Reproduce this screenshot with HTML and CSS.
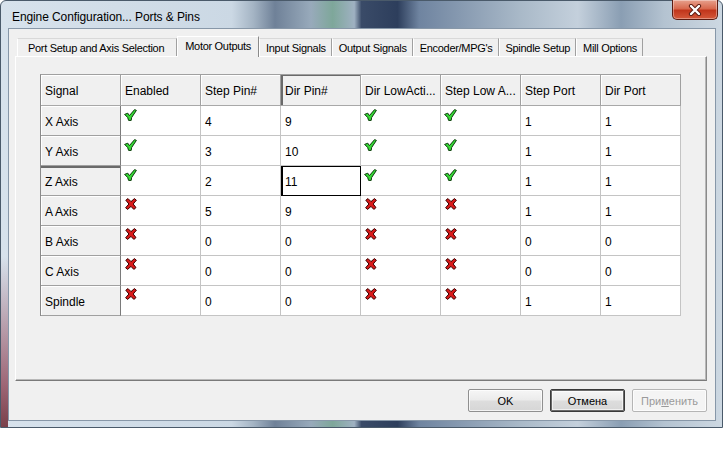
FILE: index.html
```html
<!DOCTYPE html>
<html lang="en">
<head>
    <meta charset="UTF-8">
    <title>Engine Configuration... Ports &amp; Pins</title>
    <link rel="stylesheet" href="styles.css">
</head>
<body>
    <svg class="defs" width="0" height="0">
        <symbol id="chk" viewBox="0 0 13 12">
            <polygon points="0.6,5.4 3.8,4.2 5.4,6.6 10.6,0.6 12.4,1.4 7.6,8.6 7.2,11.4 4.6,11.4 3.6,8.4" fill="#35d935" stroke="#0b3a0b" stroke-width="1" stroke-linejoin="round"/>
        </symbol>
        <symbol id="crs" viewBox="0 0 12 12">
            <polygon points="0.8,2.2 3,0.6 6,3.6 9.4,0.6 11.4,2.2 8.2,6 11,9.6 8.8,11.4 6,8.4 2.6,11.4 0.6,9.8 3.9,6" fill="#d81a1a" stroke="#3d0000" stroke-width="1" stroke-linejoin="round"/>
        </symbol>
    </svg>

    <div class="window">
        <div class="titlebar">
            <span class="title">Engine Configuration... Ports &amp; Pins</span>
            <div class="close-btn">
                <svg width="14" height="12" viewBox="0 0 14 12">
                    <path d="M3 2 L11 10 M11 2 L3 10" stroke="#5a1a10" stroke-width="4.2" stroke-linecap="round"/>
                    <path d="M3 2 L11 10 M11 2 L3 10" stroke="#fff" stroke-width="2.4" stroke-linecap="round"/>
                </svg>
            </div>
        </div>

        <div class="client">
            <div class="tabs">
                <div class="tab first">Port Setup and Axis Selection</div>
                <div class="tab active">Motor Outputs</div>
                <div class="tab">Input Signals</div>
                <div class="tab">Output Signals</div>
                <div class="tab">Encoder/MPG's</div>
                <div class="tab">Spindle Setup</div>
                <div class="tab">Mill Options</div>
            </div>

            <div class="tab-panel">
                <div class="grid">
                    <div class="hd">Signal</div>
                    <div class="hd">Enabled</div>
                    <div class="hd">Step Pin#</div>
                    <div class="hd hd-cur">Dir Pin#</div>
                    <div class="hd">Dir LowActi...</div>
                    <div class="hd">Step Low A...</div>
                    <div class="hd">Step Port</div>
                    <div class="hd">Dir Port</div>

                    <div class="rh">X Axis</div>
                    <div class="cell icon"><svg><use href="#chk"/></svg></div>
                    <div class="cell">4</div>
                    <div class="cell">9</div>
                    <div class="cell icon"><svg><use href="#chk"/></svg></div>
                    <div class="cell icon"><svg><use href="#chk"/></svg></div>
                    <div class="cell">1</div>
                    <div class="cell">1</div>

                    <div class="rh">Y Axis</div>
                    <div class="cell icon"><svg><use href="#chk"/></svg></div>
                    <div class="cell">3</div>
                    <div class="cell">10</div>
                    <div class="cell icon"><svg><use href="#chk"/></svg></div>
                    <div class="cell icon"><svg><use href="#chk"/></svg></div>
                    <div class="cell">1</div>
                    <div class="cell">1</div>

                    <div class="rh rh-cur">Z Axis</div>
                    <div class="cell icon"><svg><use href="#chk"/></svg></div>
                    <div class="cell">2</div>
                    <div class="cell current">11</div>
                    <div class="cell icon"><svg><use href="#chk"/></svg></div>
                    <div class="cell icon"><svg><use href="#chk"/></svg></div>
                    <div class="cell">1</div>
                    <div class="cell">1</div>

                    <div class="rh">A Axis</div>
                    <div class="cell icon"><svg class="x"><use href="#crs"/></svg></div>
                    <div class="cell">5</div>
                    <div class="cell">9</div>
                    <div class="cell icon"><svg class="x"><use href="#crs"/></svg></div>
                    <div class="cell icon"><svg class="x"><use href="#crs"/></svg></div>
                    <div class="cell">1</div>
                    <div class="cell">1</div>

                    <div class="rh">B Axis</div>
                    <div class="cell icon"><svg class="x"><use href="#crs"/></svg></div>
                    <div class="cell">0</div>
                    <div class="cell">0</div>
                    <div class="cell icon"><svg class="x"><use href="#crs"/></svg></div>
                    <div class="cell icon"><svg class="x"><use href="#crs"/></svg></div>
                    <div class="cell">0</div>
                    <div class="cell">0</div>

                    <div class="rh">C Axis</div>
                    <div class="cell icon"><svg class="x"><use href="#crs"/></svg></div>
                    <div class="cell">0</div>
                    <div class="cell">0</div>
                    <div class="cell icon"><svg class="x"><use href="#crs"/></svg></div>
                    <div class="cell icon"><svg class="x"><use href="#crs"/></svg></div>
                    <div class="cell">0</div>
                    <div class="cell">0</div>

                    <div class="rh">Spindle</div>
                    <div class="cell icon"><svg class="x"><use href="#crs"/></svg></div>
                    <div class="cell">0</div>
                    <div class="cell">0</div>
                    <div class="cell icon"><svg class="x"><use href="#crs"/></svg></div>
                    <div class="cell icon"><svg class="x"><use href="#crs"/></svg></div>
                    <div class="cell">1</div>
                    <div class="cell">1</div>
                </div>
            </div>

            <div class="buttons">
                <button class="btn">OK</button>
                <button class="btn default">Отмена</button>
                <button class="btn disabled">При<u>м</u>енить</button>
            </div>
        </div>
    </div>
</body>
</html>
```

FILE: styles.css
```css
* {
    margin: 0;
    padding: 0;
    box-sizing: border-box;
}

body {
    background: #fff;
    font-family: 'Liberation Sans', Arial, sans-serif;
    color: #000;
}

.defs {
    position: absolute;
}

/* window frame (aero glass) */
.window {
    width: 723px;
    height: 428px;
    display: flex;
    flex-direction: column;
    padding: 0 6px 6px 7px;
    border: 1px solid #4a5a6a;
    border-radius: 6px 6px 0 0;
    background:
        linear-gradient(180deg, rgba(255,255,255,0) 60%, rgba(120,20,40,0.6) 90%, rgba(90,10,20,0.75) 100%) left / 7px 100% no-repeat,
        linear-gradient(90deg, #d7e2ec 0%, #cbd8e4 32%, #a4b4c4 35%, #6f8198 38%, #98aabb 43%, #7ea79a 46%, #9fb1c2 49%, #3a4b68 50%, #2d3e5c 55%, #6f84a0 58%, #a9b9c8 72%, #c4d0dc 80%, #8a9eb3 86%, #b4c3d1 92%, #cdd8e2 100%);
}

.titlebar {
    height: 30px;
    display: flex;
    align-items: flex-start;
    justify-content: space-between;
}

.title {
    font-size: 12px;
    padding: 9px 0 0 4px;
    letter-spacing: -0.1px;
}

.close-btn {
    width: 46px;
    height: 20px;
    margin-top: -1px;
    margin-right: -2px;
    display: flex;
    align-items: center;
    justify-content: center;
    border: 1px solid #5c1c12;
    border-top: none;
    border-radius: 0 0 5px 5px;
    background: linear-gradient(180deg, #e7a18d 0%, #d8694e 45%, #c1361c 55%, #d4583a 100%);
    box-shadow: inset 0 0 0 1px rgba(255,255,255,0.35);
}

/* client area */
.client {
    flex: 1;
    display: flex;
    flex-direction: column;
    background: #f0f0f0;
    border: 1px solid #8797a8;
    padding: 6px 8px 8px 6px;
}

.tabs {
    height: 21px;
    display: flex;
    align-items: flex-end;
    padding-left: 2px;
    font-size: 11px;
    letter-spacing: -0.3px;
}

.tab {
    height: 18px;
    padding: 0 5px 0 6px;
    display: flex;
    align-items: center;
    border: 1px solid #d9d9d9;
    border-bottom: none;
    border-left-color: #fff;
    border-right-color: #a0a0a0;
    background: #f0f0f0;
    white-space: nowrap;
}

.tab.first {
    padding: 0 12px 0 10px;
}

.tab.active {
    height: 21px;
    padding: 0 7px 2px 7px;
    border-color: #fff #8a8a8a #f0f0f0 #fff;
    margin-bottom: -1px;
    position: relative;
    z-index: 1;
}

.tab-panel {
    height: 325px;
    border: 1px solid;
    border-color: #fff #8a8a8a #7a7a7a #fff;
    box-shadow: inset -1px -1px 0 #b8b8b8;
    padding: 17px 0 0 24px;
}

/* data grid */
.grid {
    display: grid;
    grid-template-columns: repeat(8, 80px);
    grid-template-rows: 31px repeat(7, 30px);
    width: 641px;
    border-left: 1px solid #8a8a8a;
    border-top: 1px solid #a0a0a0;
    font-size: 12px;
    background: #fff;
}

.grid > div {
    display: flex;
    align-items: center;
    padding-left: 4px;
    white-space: nowrap;
    overflow: hidden;
}

.hd {
    background: #f0f0f0;
    border-right: 1px solid #a0a0a0;
    border-bottom: 1px solid #a8a8a8;
    box-shadow: inset 1px 1px 0 #fff;
    padding-top: 2px;
}

.hd-cur {
    box-shadow: inset 2px 1px 0 #6a6a6a;
}

.rh {
    background: #f0f0f0;
    border-right: 1px solid #7a7a7a;
    border-bottom: 1px solid #a0a0a0;
    box-shadow: inset 1px 1px 0 #fff;
    padding-top: 2px;
}

.rh-cur {
    box-shadow: inset 0 2px 0 #6a6a6a;
}

.cell {
    border-right: 1px solid #c4c4c4;
    border-bottom: 1px solid #c4c4c4;
    padding-top: 2px;
}

.cell.icon {
    align-items: flex-start;
    padding: 3px 0 0 3px;
}

.cell.icon svg {
    width: 13px;
    height: 12px;
}

.cell.icon svg.x {
    width: 12px;
    height: 12px;
    margin: -1px 0 0 1px;
}

.cell.current {
    border-right-color: #000;
    border-bottom-color: #000;
    box-shadow: inset 2px 1px 0 #000;
}

/* dialog buttons */
.buttons {
    display: flex;
    justify-content: flex-end;
    gap: 7px;
    margin-top: 8px;
}

.btn {
    width: 75px;
    height: 23px;
    font-family: 'Liberation Sans', Arial, sans-serif;
    font-size: 11px;
    color: #000;
    border: 1px solid #8f8f8f;
    border-radius: 2px;
    background: linear-gradient(180deg, #f6f6f6 0%, #ebebeb 48%, #dddddd 52%, #d6d6d6 100%);
    box-shadow: inset 0 0 0 1px rgba(255,255,255,0.7);
}

.btn.default {
    border: 1px solid #3a3a3a;
    box-shadow: inset 0 0 0 1px #6a6a6a, inset 0 0 0 2px rgba(255,255,255,0.6);
}

.btn.disabled {
    color: #9a9a9a;
    border-color: #b5b5b5;
    background: #f4f4f4;
}

.btn u {
    text-decoration-color: #9a9a9a;
}
```
